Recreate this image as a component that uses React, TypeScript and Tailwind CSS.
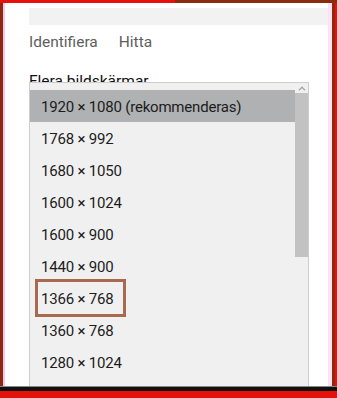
import React from "react";

const rows = [
  "1768 × 992",
  "1680 × 1050",
  "1600 × 1024",
  "1600 × 900",
  "1440 × 900",
  "1366 × 768",
  "1360 × 768",
  "1280 × 1024",
];

export default function App() {
  return (
    <div
      className="w-[337px] h-[398px] flex flex-col bg-[#e3120b] overflow-hidden"
      style={{ fontFamily: 'Roboto, "Noto Sans", sans-serif' }}
    >
      <div className="flex h-[3px] shrink-0">
        <div className="w-[175px] bg-[#e8100a]" />
        <div className="flex-1 bg-[#8c2b0b]" />
      </div>
      <div className="flex flex-1 min-h-0">
        <div className="w-[3px] bg-[#8c2b0b]" />
        <div className="w-[2px] bg-[#f7c6ee]" />
        <div className="flex-1 bg-white flex flex-col pl-[24px]">
          <div className="h-[5px] shrink-0" />
          <div className="h-[17px] bg-[#f2f2f2] shrink-0" />
          <div className="flex gap-[21px] text-[15.5px] text-[#5e5e5e] mt-[7px] leading-[20px] shrink-0">
            <span>Identifiera</span>
            <span>Hitta</span>
          </div>
          <div className="text-[15.5px] text-[#111] mt-[19px] leading-[20px] shrink-0">
            Flera bildskärmar
          </div>
          <div className="relative z-10 -mt-[9px] w-[280px] flex-1 border border-[#cdcdcd] border-b-0 bg-[#f0f0f0] flex">
            <div className="flex-1 flex flex-col text-[15px] tracking-[-0.2px] text-[#1c1c1c] pt-[7px]">
              <div className="h-[32px] bg-[#afb1b3] flex items-center pt-[3px] pl-[11px] shrink-0">
                1920 × 1080 (rekommenderas)
              </div>
              {rows.map((r) => (
                <div key={r} className="h-[32px] flex items-center pt-[3px] pl-[11px] shrink-0">
                  {r}
                </div>
              ))}
            </div>
            <div className="w-[13px] flex flex-col">
              <div className="h-[10px] flex items-center justify-center bg-[#f0f0f0] shrink-0">
                <svg width="8" height="5" viewBox="0 0 8 5">
                  <path d="M1 4.2 L4 1.2 L7 4.2" stroke="#a6a6a6" strokeWidth="1.3" fill="none" />
                </svg>
              </div>
              <div className="h-[164px] bg-[#c2c2c2] shrink-0" />
            </div>
            <div className="absolute left-[5px] top-[196px] w-[91px] h-[38px] border-[3px] border-[#a8694e]" />
          </div>
        </div>
        <div className="w-[4px] bg-[#fde2f6]" />
        <div className="w-[3px] bg-[#8c2b0b]" />
        <div className="w-[2px] bg-[#e3120b]" />
      </div>
      <div className="h-[1px] bg-[#888] shrink-0" />
      <div className="h-[4px] bg-[#111] shrink-0" />
      <div className="h-[7px] bg-[#e3120b] shrink-0" />
    </div>
  );
}
